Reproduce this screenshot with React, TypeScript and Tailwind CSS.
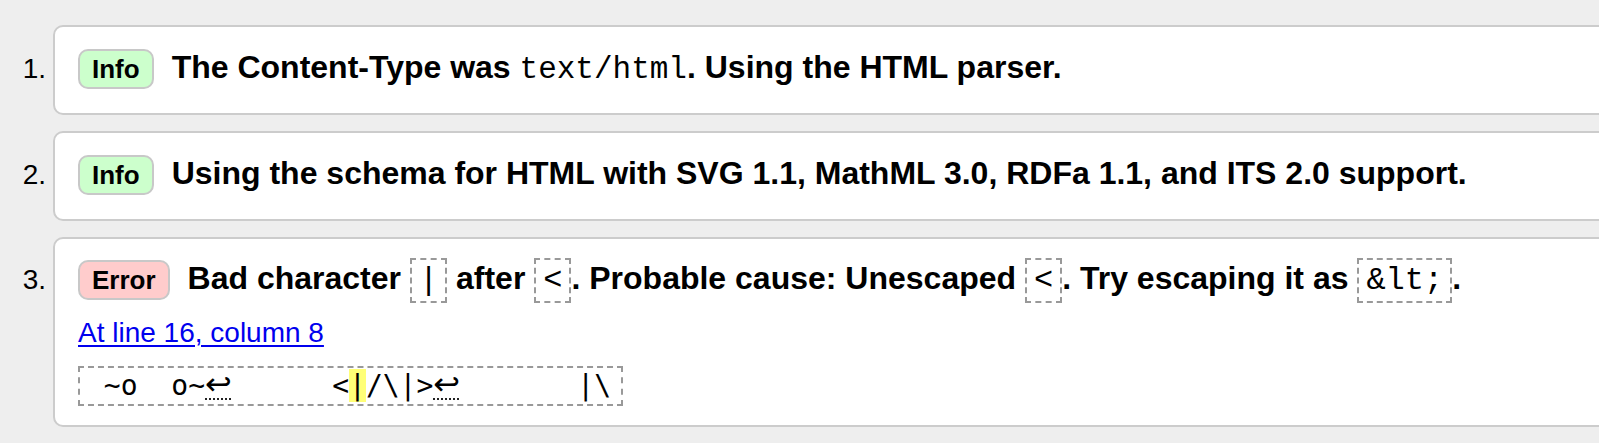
import React from "react";

// message list, the validator output look

type Kind = "info" | "error";

function Badge({ kind }: { kind: Kind }) {
  if (kind === "error") {
    return (
      <span className="inline-flex h-[40px] shrink-0 items-center rounded-[10px] border-2 border-[#c8c8c8] bg-[#ffcccc] px-[12px] text-[26px] font-bold leading-[36px]">
        Error
      </span>
    );
  }
  return (
    <span className="inline-flex h-[40px] shrink-0 items-center rounded-[10px] border-2 border-[#c8c8c8] bg-[#ccffcc] px-[12px] text-[26px] font-bold leading-[36px]">
      Info
    </span>
  );
}

function Code({ children }: { children: React.ReactNode }) {
  return (
    <code className="border-2 border-dashed border-[#999] px-[7px] py-[2px] font-['Liberation_Mono',monospace] text-[32px] font-normal whitespace-pre">
      {children}
    </code>
  );
}

function Lf() {
  return (
    <span className="inline-block w-[26px] border-b-2 border-dotted border-[#222] font-['DejaVu_Sans',sans-serif] text-[32px] leading-[28px]">
      ↩
    </span>
  );
}

function Row({ kind, children }: { kind: Kind; children: React.ReactNode }) {
  return (
    <div className="flex items-baseline">
      <Badge kind={kind} />
      <p className="ml-[18px] text-[32px] font-bold leading-[36px] whitespace-nowrap">{children}</p>
    </div>
  );
}

export default function App() {
  return (
    <div className="h-[443px] w-full overflow-hidden bg-[#eeeeee] font-['Liberation_Sans',Arial,sans-serif] text-black">
      <ol className="flex w-[1640px] flex-col gap-[16px] pt-[25px]">
        <li className="flex items-baseline">
          <span className="w-[46px] shrink-0 text-right text-[28px]">1.</span>
          <div className="ml-[7px] h-[90px] flex-1 rounded-[10px] border-2 border-[#cccccc] bg-white pl-[23px] pt-[22px]">
            <Row kind="info">
              The Content-Type was{" "}
              <span className="font-['Liberation_Mono',monospace] text-[31px] font-normal">text/html</span>. Using the
              HTML parser.
            </Row>
          </div>
        </li>

        <li className="flex items-baseline">
          <span className="w-[46px] shrink-0 text-right text-[28px]">2.</span>
          <div className="ml-[7px] h-[90px] flex-1 rounded-[10px] border-2 border-[#cccccc] bg-white pl-[23px] pt-[22px]">
            <Row kind="info">
              Using the schema for HTML with SVG 1.1, MathML 3.0, RDFa 1.1, and ITS 2.0 support.
            </Row>
          </div>
        </li>

        <li className="flex items-baseline">
          <span className="w-[46px] shrink-0 text-right text-[28px]">3.</span>
          <div className="ml-[7px] flex-1 rounded-[10px] border-2 border-[#cccccc] bg-white pb-[19px] pl-[23px] pt-[21px]">
            <Row kind="error">
              Bad character <Code>|</Code> after <Code>&lt;</Code>. Probable cause: Unescaped <Code>&lt;</Code>. Try
              escaping it as <Code>&amp;lt;</Code>.
            </Row>
            <div className="mt-[17px] text-[28px] leading-[32px]">
              <a href="#l16c8" className="text-[#0000ee] underline decoration-2 underline-offset-[3px]">
                At line 16, column 8
              </a>
            </div>
            <div className="mt-[17px] w-[545px] border-2 border-dashed border-[#999] py-[2px] pl-[7px] font-['DejaVu_Sans_Mono',monospace] text-[28px] leading-[32px] whitespace-pre">
              {" ~o  o~"}
              <Lf />
              {"      <"}
              <span className="bg-[#ffff77]">|</span>
              {"/\\|>"}
              <Lf />
              {"       |\\"}
            </div>
          </div>
        </li>
      </ol>
    </div>
  );
}
